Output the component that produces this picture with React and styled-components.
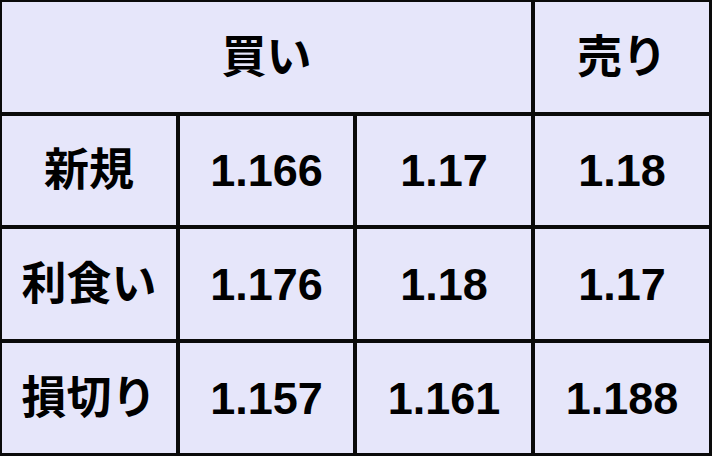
import React from "react";
import styled, { createGlobalStyle } from "styled-components";

const Global = createGlobalStyle`
  html, body { margin: 0; padding: 0; background: #e6e6fa; }
`;

const Table = styled.div`
  box-sizing: border-box;
  width: 712px;
  height: 456px;
  display: grid;
  grid-template-columns: 174px 173px 174px 174px;
  grid-template-rows: 110px 109px 110px 110px;
  gap: 4px;
  padding: 2px 3px 3px 2px;
  background: #0a0a0a;
`;

const Cell = styled.div`
  background: #e6e6fa;
  display: flex;
  align-items: center;
  justify-content: center;
  grid-column: ${(p) => p.$span || "auto"};
  font-family: "Liberation Sans", "Noto Sans CJK JP", sans-serif;
  font-weight: 700;
  font-size: 45px;
  color: #000;
  line-height: 1;
`;

const rows = [
  ["新規", "1.166", "1.17", "1.18"],
  ["利食い", "1.176", "1.18", "1.17"],
  ["損切り", "1.157", "1.161", "1.188"],
];

export default function App() {
  return (
    <>
      <Global />
      <Table>
        <Cell $span="1 / span 3">買い</Cell>
        <Cell>売り</Cell>
        {rows.map((r, i) =>
          r.map((c, j) => <Cell key={`${i}-${j}`}>{c}</Cell>)
        )}
      </Table>
    </>
  );
}
